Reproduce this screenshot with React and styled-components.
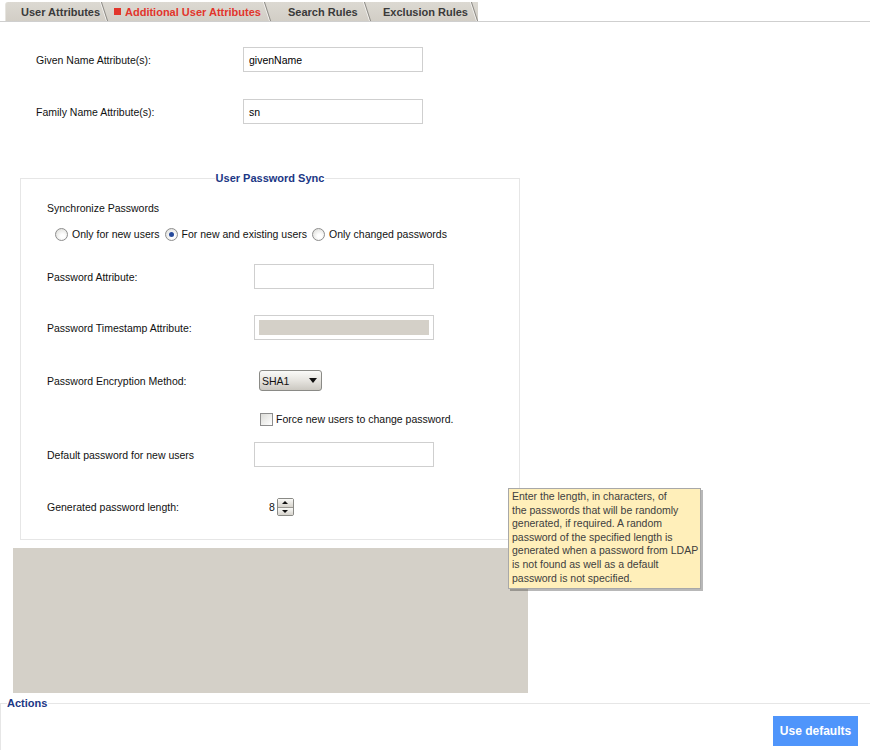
import React from 'react';
import styled, { createGlobalStyle } from 'styled-components';

const GlobalStyle = createGlobalStyle`
  html, body {
    margin: 0;
    padding: 0;
    background: #ffffff;
  }
  body {
    font-family: "Liberation Sans", Arial, sans-serif;
    font-size: 10.5px;
    color: #000;
  }
`;

const Page = styled.div`
  position: relative;
  width: 870px;
  height: 750px;
  overflow: hidden;
`;

const TabBar = styled.div`
  display: flex;
  align-items: flex-end;
  height: 21px;
  padding-left: 5px;
  border-bottom: 1px solid #cfcfcf;
`;

const Tab = styled.div`
  position: relative;
  box-sizing: border-box;
  width: ${(p) => p.$w}px;
  height: 19px;
  padding-left: ${(p) => p.$pl}px;
  display: flex;
  align-items: center;
  gap: 4px;
  background: linear-gradient(#dcd9d2, #d2cec6);
  font-size: 11px;
  font-weight: bold;
  color: ${(p) => (p.$active ? '#e2352b' : '#3a3a3a')};
  border-top-left-radius: ${(p) => (p.$first ? '3px' : '0')};
  border-left: ${(p) => (p.$first ? '1px solid #e6e4df' : 'none')};

  &::after {
    content: '';
    position: absolute;
    right: 3px;
    top: 0;
    width: 1px;
    height: 19px;
    background: #8c8a85;
    box-shadow: -1px 0 0 #f4f3f0;
    transform: skewX(18deg);
  }
`;

const RedSquare = styled.span`
  width: 7px;
  height: 7px;
  background: #e2352b;
  display: inline-block;
`;

const Content = styled.div`
  padding-top: 25px;
`;

const Row = styled.div`
  display: grid;
  grid-template-columns: 207px auto;
  align-items: center;
  height: ${(p) => p.$h || 25}px;
  margin-top: ${(p) => p.$mt || 0}px;
  padding-left: ${(p) => p.$pl || 0}px;
`;

const Label = styled.span`
  color: #111;
`;

const TextBox = styled.div`
  box-sizing: border-box;
  width: 180px;
  height: 25px;
  border: 1px solid #cfcfcf;
  padding: 4px 5px;
  display: flex;
  align-items: center;
  background: #fff;
`;

const DisabledFill = styled.div`
  flex: 1;
  align-self: stretch;
  margin: 0 -1px;
  background: #d4d0c8;
`;

const Fieldset = styled.fieldset`
  box-sizing: border-box;
  width: 500px;
  margin: 47px 0 0 20px;
  padding: 0;
  border: 1px solid #e6e6e6;
`;

const Legend = styled.legend`
  margin: 0 auto;
  padding: 0 1px;
  line-height: 14px;
  font-weight: bold;
  font-size: 11px;
  color: #1b3785;
`;

const FieldsetBody = styled.div`
  padding: 0 0 23px 26px;
`;

const SubTitle = styled.div`
  margin-top: 16px;
  line-height: 14px;
  color: #111;
`;

const RadioRow = styled.div`
  display: flex;
  align-items: center;
  margin-top: 12px;
  padding-left: 8px;
  height: 14px;
`;

const RadioItem = styled.label`
  display: flex;
  align-items: center;
  gap: 4px;
  margin-right: 5px;
  color: #111;
`;

const RadioCircle = styled.span`
  box-sizing: border-box;
  width: 13px;
  height: 13px;
  border-radius: 50%;
  border: 1px solid #8d8d8d;
  background: radial-gradient(circle at 60% 65%, #ffffff 20%, #dcdcd8 90%);
  display: flex;
  align-items: center;
  justify-content: center;

  &::after {
    content: '';
    width: 5px;
    height: 5px;
    border-radius: 50%;
    background: ${(p) => (p.$on ? '#274a9b' : 'transparent')};
  }
`;

const Select = styled.div`
  box-sizing: border-box;
  margin-left: 5px;
  width: 63px;
  height: 21px;
  border: 1px solid #8a8a86;
  border-radius: 3px;
  background: linear-gradient(#fafaf8, #e6e4df 50%, #cbc8c1);
  display: flex;
  align-items: center;
  justify-content: space-between;
  padding: 0 4px 0 2px;
  color: #111;
`;

const Caret = styled.span`
  width: 0;
  height: 0;
  border-left: 4px solid transparent;
  border-right: 4px solid transparent;
  border-top: 5px solid #111;
`;

const CheckRow = styled.label`
  display: flex;
  align-items: center;
  gap: 3px;
  height: 14px;
  margin-top: 21px;
  padding-left: 213px;
  color: #111;
`;

const CheckBox = styled.span`
  box-sizing: border-box;
  width: 13px;
  height: 13px;
  border: 1px solid #8d8d8d;
  background: linear-gradient(135deg, #dcdcd8, #ffffff);
`;

const SpinGroup = styled.div`
  display: flex;
  align-items: center;
  gap: 2px;
  margin-left: 15px;
  color: #111;
`;

const Spinner = styled.div`
  box-sizing: border-box;
  width: 17px;
  height: 18px;
  border: 1px solid #8a8a86;
  border-radius: 2px;
  display: flex;
  flex-direction: column;
  background: #d8d5ce;
`;

const SpinHalf = styled.span`
  flex: 1;
  display: flex;
  align-items: center;
  justify-content: center;
  background: linear-gradient(#fafaf8, #d6d3cc);
  border-top: ${(p) => (p.$down ? '1px solid #9a9893' : 'none')};

  &::after {
    content: '';
    border-left: 3px solid transparent;
    border-right: 3px solid transparent;
    ${(p) => (p.$down ? 'border-top: 3px solid #111;' : 'border-bottom: 3px solid #111;')}
  }
`;

const GrayPanel = styled.div`
  width: 515px;
  height: 145px;
  margin: 8px 0 0 13px;
  background: #d4d0c8;
`;

const Actions = styled.fieldset`
  box-sizing: border-box;
  margin: 3px 0 0 0;
  padding: 0 12px 10px 0;
  border: 1px solid #e6e6e6;
  border-right: none;
  border-bottom: none;
  display: flex;
  flex-direction: column;
  align-items: flex-end;
`;

const ActionsLegend = styled.legend`
  margin-left: 6px;
  padding: 0 1px 0 0;
  line-height: 14px;
  font-weight: bold;
  font-size: 11px;
  color: #1b3785;
`;

const Button = styled.button`
  margin-top: 6px;
  width: 85px;
  height: 30px;
  border: none;
  background: #4f95fb;
  color: #fff;
  font-family: "Liberation Sans", Arial, sans-serif;
  font-weight: bold;
  font-size: 12px;
  padding: 0;
`;

const Tooltip = styled.div`
  position: absolute;
  left: 508px;
  top: 488px;
  box-sizing: border-box;
  width: 193px;
  padding: 1px 3px 3px 3px;
  background: #ffefba;
  border: 1px solid #a8a8a8;
  box-shadow: 2px 2px 0 rgba(0, 0, 0, 0.28);
  color: #404040;
  line-height: 13.6px;
  white-space: nowrap;
`;

const tabs = [
  { label: 'User Attributes', w: 103, pl: 15 },
  { label: 'Additional User Attributes', w: 163, pl: 6, active: true },
  { label: 'Search Rules', w: 100, pl: 17 },
  { label: 'Exclusion Rules', w: 107, pl: 12 },
];

const radios = [
  { label: 'Only for new users' },
  { label: 'For new and existing users', on: true },
  { label: 'Only changed passwords' },
];

export default function App() {
  return (
    <Page>
      <GlobalStyle />
      <TabBar>
        {tabs.map((t, i) => (
          <Tab key={t.label} $w={t.w} $pl={t.pl} $active={t.active} $first={i === 0}>
            {t.active && <RedSquare />}
            {t.label}
          </Tab>
        ))}
      </TabBar>

      <Content>
        <Row $pl={36}>
          <Label>Given Name Attribute(s):</Label>
          <TextBox>givenName</TextBox>
        </Row>
        <Row $pl={36} $mt={27}>
          <Label>Family Name Attribute(s):</Label>
          <TextBox>sn</TextBox>
        </Row>

        <Fieldset>
          <Legend align="center">User Password Sync</Legend>
          <FieldsetBody>
            <SubTitle>Synchronize Passwords</SubTitle>
            <RadioRow>
              {radios.map((r) => (
                <RadioItem key={r.label}>
                  <RadioCircle $on={r.on} />
                  {r.label}
                </RadioItem>
              ))}
            </RadioRow>
            <Row $mt={23}>
              <Label>Password Attribute:</Label>
              <TextBox />
            </Row>
            <Row $mt={26}>
              <Label>Password Timestamp Attribute:</Label>
              <TextBox>
                <DisabledFill />
              </TextBox>
            </Row>
            <Row $mt={30} $h={21}>
              <Label>Password Encryption Method:</Label>
              <Select>
                SHA1
                <Caret />
              </Select>
            </Row>
            <CheckRow>
              <CheckBox />
              Force new users to change password.
            </CheckRow>
            <Row $mt={16}>
              <Label>Default password for new users</Label>
              <TextBox />
            </Row>
            <Row $mt={31} $h={18}>
              <Label>Generated password length:</Label>
              <SpinGroup>
                8
                <Spinner>
                  <SpinHalf />
                  <SpinHalf $down />
                </Spinner>
              </SpinGroup>
            </Row>
          </FieldsetBody>
        </Fieldset>

        <GrayPanel />

        <Actions>
          <ActionsLegend>Actions</ActionsLegend>
          <Button>Use defaults</Button>
        </Actions>
      </Content>

      <Tooltip>
        Enter the length, in characters, of
        <br />
        the passwords that will be randomly
        <br />
        generated, if required. A random
        <br />
        password of the specified length is
        <br />
        generated when a password from LDAP
        <br />
        is not found as well as a default
        <br />
        password is not specified.
      </Tooltip>
    </Page>
  );
}
